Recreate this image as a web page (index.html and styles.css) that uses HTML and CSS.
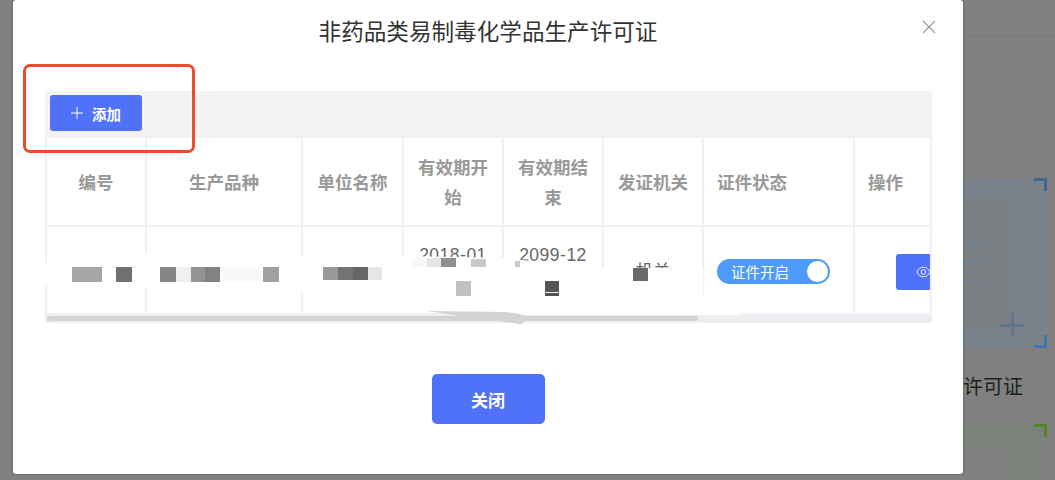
FILE: index.html
```html
<!DOCTYPE html>
<html lang="zh-CN">
<head>
<meta charset="utf-8">
<title>非药品类易制毒化学品生产许可证</title>
<link rel="stylesheet" href="styles.css">
</head>
<body>
<div class="under">
  <div class="under-top"></div>
  <section class="bg-card blue">
    <span class="corner tr"></span>
    <span class="corner br"></span>
    <div class="bg-inner">
      <i class="bar"></i><i class="bar"></i><i class="bar"></i>
      <span class="cross"></span>
    </div>
  </section>
  <p class="bg-label">许可证</p>
  <section class="bg-card green">
    <span class="corner tr"></span>
    <div class="bg-inner"></div>
  </section>
</div>

<div class="modal">
  <h1 class="modal-title">非药品类易制毒化学品生产许可证</h1>
  <button class="close-x" aria-label="关闭">
    <svg width="14" height="14" viewBox="0 0 14 14"><path d="M1 1 13 13M13 1 1 13" fill="none" stroke="#9a9a9a" stroke-width="1.2"/></svg>
  </button>
  <div class="table-wrap">
    <div class="toolbar">
      <button class="btn add-btn">
        <svg width="12" height="12" viewBox="0 0 12 12"><path d="M6 0V12M0 6H12" fill="none" stroke="#fff" stroke-width="1"/></svg>
        <span>添加</span>
      </button>
    </div>
    <table class="grid">
      <colgroup>
        <col class="c1"><col class="c2"><col class="c3"><col class="c4"><col class="c5"><col class="c6"><col class="c7"><col class="c8">
      </colgroup>
      <thead>
        <tr>
          <th>编号</th><th>生产品种</th><th>单位名称</th><th>有效期开始</th><th>有效期结束</th><th>发证机关</th><th class="left">证件状态</th><th class="left">操作</th>
        </tr>
      </thead>
      <tbody>
        <tr>
          <td></td><td></td><td></td>
          <td class="date">2018-01<br>&nbsp;</td>
          <td class="date">2099-12<br>&nbsp;</td>
          <td>机关</td>
          <td class="left">
            <div class="toggle"><span>证件开启</span><i class="knob"></i></div>
          </td>
          <td class="left action">
            <button class="btn eye-btn">
              <svg width="15" height="12" viewBox="0 0 15 12"><path d="M.7 6C2.4 3 4.8 1.2 7.5 1.2S12.600 3 14.300 6C12.600 9 10.200 10.800 7.500 10.800S2.400 9 .7 6Z" fill="none" stroke="#fff" stroke-width=".9"/><circle cx="7.500" cy="6" r="2.300" fill="none" stroke="#fff" stroke-width=".9"/></svg>
            </button>
          </td>
        </tr>
      </tbody>
    </table>
    <div class="scroll-track"><div class="scroll-thumb"></div></div>
  </div>
  <div class="footer"><button class="btn close-btn">关闭</button></div>
</div>

<div class="annotation"></div>

<svg class="redaction" width="1055" height="480" viewBox="0 0 1055 480" aria-hidden="true">
  <path fill="#fff" d="M14 263H130L146 253H160L300 257L403 256L503 258L600 268H703V296L742 312V315H530L500 311H403L300 292L146 287L14 285Z"/>
  <path fill="#f9f9f9" d="M176 267H262V281H176Z"/>
  <g>
    <rect x="72" y="267" width="30" height="15" fill="#a6a6a6"/>
    <rect x="116" y="267" width="16" height="15" fill="#707070"/>
    <rect x="160" y="267" width="16" height="15" fill="#868686"/>
    <rect x="176" y="267" width="15" height="15" fill="#f0f0f0"/>
    <rect x="191" y="267" width="14" height="15" fill="#939393"/>
    <rect x="205" y="267" width="15" height="15" fill="#828282"/>
    <rect x="263" y="267" width="16" height="15" fill="#a0a0a0"/>
    <rect x="323" y="267" width="15" height="13" fill="#999"/>
    <rect x="338" y="267" width="15" height="13" fill="#737373"/>
    <rect x="353" y="267" width="15" height="13" fill="#666"/>
    <rect x="368" y="267" width="14" height="13" fill="#e6e6e6"/>
    <rect x="412" y="258" width="15" height="9" fill="#f8f8f8"/>
    <rect x="427" y="258" width="14" height="9" fill="#e6e6e6"/>
    <rect x="441" y="258" width="15" height="9" fill="#8f8f8f"/>
    <rect x="471" y="259" width="15" height="8" fill="#c8c8c8"/>
    <rect x="515" y="261" width="5" height="6" fill="#c8c8c8"/>
    <rect x="456" y="281" width="15" height="15" fill="#c1c1c1"/>
    <rect x="545" y="281" width="14" height="15" fill="#565656"/>
    <rect x="545" y="292" width="14" height="1" fill="#eee"/>
    <rect x="633" y="268" width="15" height="13" fill="#6a6a6a"/>
  </g>
  <path fill="#d3d3d3" d="M427 311 505 312Q526 314 526 319 524 325 518 324 495 320 460 316Z"/>
</svg>
</body>
</html>
```
FILE: styles.css
```css
* { box-sizing: border-box; }
html, body { margin: 0; height: 100%; }
body {
  width: 1055px;
  height: 480px;
  overflow: hidden;
  position: relative;
  background: #808080;
  font-family: "Noto Sans CJK SC", "Liberation Sans", sans-serif;
}
button { font-family: inherit; border: 0; padding: 0; cursor: pointer; }

/* page dimmed behind the dialog */
.under { margin-left: 963px; height: 480px; }
.under-top { height: 36px; border-bottom: 1px solid #777; margin-bottom: 142px; }
.bg-card { position: relative; width: 84px; }
.bg-card.blue { height: 170px; background: #79818a; padding-top: 24px; }
.bg-card.green { height: 60px; background: #7c817a; padding-top: 24px; }
.bg-inner {
  position: relative;
  width: 47px;
  height: 124px;
  background: #7a7f83;
  border-top-right-radius: 6px;
  padding-top: 40px;
  display: flex;
  flex-direction: column;
  gap: 13px;
}
.green .bg-inner { height: 40px; background: #808080; }
.bar { display: block; width: 21px; height: 5px; background: #74808c; }
.cross { position: absolute; right: -14px; bottom: -11px; width: 24px; height: 24px; }
.cross::before, .cross::after { content: ""; position: absolute; background: #62758a; }
.cross::before { left: 0; right: 0; top: 10.500px; height: 3px; }
.cross::after { top: 0; bottom: 0; left: 10.500px; width: 3px; }
.corner { position: absolute; right: 0; width: 13px; height: 13px; }
.corner.tr { top: 0; border-top: 3px solid #40658f; border-right: 3px solid #40658f; }
.corner.br { bottom: 0; border-bottom: 3px solid #3f74ae; border-right: 3px solid #3f74ae; }
.green .corner.tr { border-color: #568528; top: 0; }
.bg-label {
  margin: 0;
  height: 76px;
  padding-top: 23px;
  font-size: 20px;
  line-height: 30px;
  color: #1f1f1f;
  white-space: nowrap;
}

/* dialog */
.modal {
  position: absolute;
  left: 13px;
  top: 0;
  width: 950px;
  height: 474px;
  padding: 0 32px;
  background: #fff;
  border-radius: 3px;
  box-shadow: 0 0 2px rgba(0, 0, 0, .45);
}
.modal-title {
  margin: 0;
  height: 91px;
  padding-top: 14px;
  text-align: center;
  font-size: 22.600px;
  line-height: 34px;
  font-weight: 400;
  color: #333;
}
.close-x { position: absolute; right: 27px; top: 20px; width: 14px; height: 14px; background: none; display: flex; }
.table-wrap { width: 887px; background: #f3f3f3; border-bottom: 1px solid #eef0f6; }
.toolbar { height: 45px; padding: 4px 0 0 5px; }
.btn { background: #4f72f9; color: #fff; display: flex; align-items: center; justify-content: center; }
.add-btn {
  width: 92px;
  height: 36px;
  border-radius: 3px;
  gap: 9px;
  font-size: 14.500px;
  font-weight: 700;
}

.grid {
  width: 887px;
  table-layout: fixed;
  border-collapse: separate;
  border-spacing: 0;
  background: #fff;
  border-top: 2px solid #f0f1f7;
  border-left: 2px solid #f0f1f7;
  border-right: 2px solid #eef0f6;
}
.c1 { width: 100px; }
.c2 { width: 156px; }
.c3 { width: 101px; }
.c4 { width: 100px; }
.c5 { width: 100px; }
.c6 { width: 100px; }
.c7 { width: 151px; }
.c8 { width: 75px; }
th, td {
  padding: 0 12px;
  text-align: center;
  border-right: 2px solid #f0f1f7;
  border-bottom: 2px solid #f0f1f7;
  overflow: hidden;
}
th:last-child, td:last-child { border-right: 0; }
.grid td.left, .grid th.left { text-align: left; padding-left: 13px; }
th {
  height: 89px;
  font-size: 17.500px;
  line-height: 30px;
  font-weight: 700;
  color: #999;
}
td {
  height: 88px;
  font-size: 17.500px;
  line-height: 30px;
  color: #666;
}
td.date {
  font-family: "Liberation Sans", sans-serif;
  letter-spacing: .5px;
  padding: 0 4px;
}
.toggle {
  position: relative;
  display: flex;
  align-items: center;
  width: 113px;
  height: 25px;
  margin-top: 3px;
  padding-left: 14px;
  background: #4f9bfb;
  border-radius: 13px;
  color: #fff;
  font-size: 14.500px;
  line-height: 25px;
}
.knob {
  position: absolute;
  right: 2px;
  top: 2px;
  width: 21px;
  height: 21px;
  background: #fff;
  border-radius: 50%;
}
.grid td.action { padding: 0 0 0 41px; }
.eye-btn {
  width: 60px;
  height: 36px;
  border-radius: 3px;
  padding-right: 5px;
  margin-top: 3px;
}
.scroll-track { height: 7px; padding: 1px 0 0 2px; background: #eeeef0; }
.scroll-thumb { width: 651px; height: 5px; border-radius: 3px; background: #d3d3d3; }

.footer { display: flex; justify-content: center; padding-top: 51px; }
.close-btn {
  width: 113px;
  height: 50px;
  border-radius: 5px;
  font-size: 17px;
  font-weight: 700;
}

/* marks added on top of the screenshot */
.annotation {
  position: absolute;
  left: 23px;
  top: 64px;
  width: 172px;
  height: 89px;
  border: 3.500px solid #f04a2c;
  border-radius: 7px;
}
.redaction { position: absolute; left: 0; top: 0; }
```
